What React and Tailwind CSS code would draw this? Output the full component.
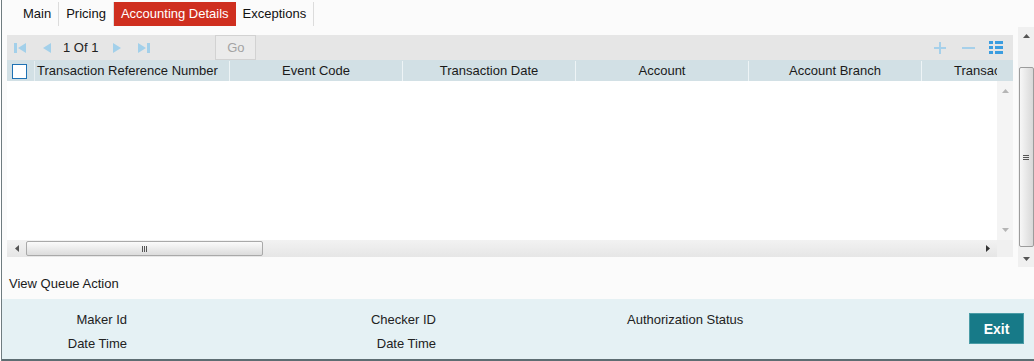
import React from 'react'

const TABS = ['Main', 'Pricing', 'Accounting Details', 'Exceptions']
const ACTIVE_TAB = 'Accounting Details'

const COLUMNS = ['Event Code', 'Transaction Date', 'Account', 'Account Branch', 'Transaction Status']

function NavIcon({ dir, edge }) {
  // pager arrows, light blue
  const flip = dir === 'right'
  return (
    <svg width={edge ? 12 : 10} height="12" viewBox={edge ? '0 0 12 12' : '0 0 10 12'} className="shrink-0" style={flip ? { transform: 'scaleX(-1)' } : undefined}>
      {edge && <rect x="0" y="1" width="3" height="10" fill="#a3d0ea" />}
      <polygon points={edge ? '12,1 4,6 12,11' : '10,1 2,6 10,11'} fill="#a3d0ea" />
    </svg>
  )
}

function Arrow({ dir, color = '#555' }) {
  const pts = {
    up: '0,4 3.5,0 7,4',
    down: '0,0 3.5,4 7,0',
    left: '4,0 0,3.5 4,7',
    right: '0,0 4,3.5 0,7',
  }[dir]
  const v = dir === 'up' || dir === 'down'
  return (
    <svg width={v ? 7 : 4} height={v ? 4 : 7} viewBox={v ? '0 0 7 4' : '0 0 4 7'}>
      <polygon points={pts} fill={color} />
    </svg>
  )
}

function Toolbar() {
  return (
    <div className="flex items-center h-[25px] bg-[#e6e6e6] pl-[7px]">
      <NavIcon dir="left" edge />
      <span className="ml-[15px] flex"><NavIcon dir="left" /></span>
      <span className="ml-[12px] text-[#222]">1 Of 1</span>
      <span className="ml-[15px] flex"><NavIcon dir="right" /></span>
      <span className="ml-[15px] flex"><NavIcon dir="right" edge /></span>
      <button className="ml-[65px] w-[41px] h-[25px] bg-[#ebebeb] border border-[#d2d2d2] text-[#a3a3a3] text-[13px]">Go</button>
      <div className="ml-auto mr-[10px] flex items-center">
        <svg width="12" height="12" viewBox="0 0 12 12">
          <rect x="5" y="0" width="2" height="12" fill="#a6d0ea" />
          <rect x="0" y="5" width="12" height="2" fill="#a6d0ea" />
        </svg>
        <svg width="13" height="12" viewBox="0 0 13 12" className="ml-[16px]">
          <rect x="0" y="5" width="13" height="2" fill="#a6d0ea" />
        </svg>
        <svg width="14" height="13" viewBox="0 0 14 13" className="ml-[14px]">
          {[0, 5, 10].map(y => (
            <g key={y}>
              <rect x="0" y={y} width="4" height="3" fill="#3b9de0" />
              <rect x="6" y={y} width="8" height="3" fill="#3b9de0" />
            </g>
          ))}
        </svg>
      </div>
    </div>
  )
}

function HeaderRow() {
  return (
    <div className="flex h-[21px] pt-px bg-[#d2e0e5] text-[#1a1a1a]">
      <div className="flex w-[990px] overflow-hidden">
        <div className="w-[28px] shrink-0 flex items-center pl-[5px] border-r border-[#e6eef1]">
          <div className="w-[15px] h-[15px] bg-white border border-[#1f72b4]" />
        </div>
        <div className="w-[195px] shrink-0 flex items-center pl-[2px] border-r border-[#eef4f6] whitespace-nowrap">
          Transaction Reference Number
        </div>
        {COLUMNS.map(c => (
          <div key={c} className="w-[173px] shrink-0 flex items-center justify-center border-r border-[#eef4f6] whitespace-nowrap">
            {c}
          </div>
        ))}
      </div>
      <div className="flex-1" />
    </div>
  )
}

function VScrollInner() {
  return (
    <div className="w-[16px] bg-[#f4f4f4] flex flex-col items-center justify-between py-[8px]">
      <Arrow dir="up" color="#b5b5b5" />
      <Arrow dir="down" color="#b5b5b5" />
    </div>
  )
}

function HScroll() {
  return (
    <div className="flex h-[17px]">
      <div className="w-[990px] flex items-center bg-gradient-to-b from-[#f2f2f2] to-[#e6e6e6]">
        <div className="w-[19px] flex justify-center"><Arrow dir="left" /></div>
        <div className="w-[237px] h-[15px] rounded-[2px] border border-[#a9a9a9] bg-gradient-to-b from-[#fbfbfb] to-[#dcdcdc] flex items-center justify-center gap-[1px]">
          <span className="w-px h-[6px] bg-[#555]" />
          <span className="w-px h-[6px] bg-[#555]" />
          <span className="w-px h-[6px] bg-[#555]" />
        </div>
        <div className="flex-1" />
        <div className="w-[19px] flex justify-center"><Arrow dir="right" color="#333" /></div>
      </div>
      <div className="flex-1 bg-[#f0f0f0]" />
    </div>
  )
}

function OuterScroll() {
  return (
    <div className="w-[16px] mt-[27px] h-[240px] bg-[#f0f0f0] flex flex-col items-center">
      <div className="h-[17px] flex items-center"><Arrow dir="up" /></div>
      <div className="h-[23px]" />
      <div className="w-[15px] h-[180px] rounded-[2px] border border-[#9c9c9c] bg-gradient-to-r from-[#f7f7f7] to-[#d8d8d8] flex flex-col items-center justify-center gap-[1px]">
        <span className="w-[6px] h-px bg-[#555]" />
        <span className="w-[6px] h-px bg-[#555]" />
        <span className="w-[6px] h-px bg-[#555]" />
      </div>
      <div className="flex-1" />
      <div className="h-[17px] flex items-center"><Arrow dir="down" /></div>
    </div>
  )
}

export default function App() {
  return (
    <div className="w-[1033px] h-[361px] ml-[1px] border-l border-[#6f7c80] bg-[#fbfbfb] overflow-hidden flex flex-col font-['Liberation_Sans',Arial,sans-serif] text-[13px] text-[#222] leading-[16px]">
      {/* Upper */}
      <div className="flex h-[299px]">
        <div className="flex-1 flex flex-col">
          {/* Tabs */}
          <div className="flex pt-[2px] pl-[14px] h-[26px]">
            {TABS.map(t => (
              <div
                key={t}
                className={
                  t === ACTIVE_TAB
                    ? 'h-[24px] px-[7px] flex items-center bg-[#cf2f1f] text-white'
                    : 'h-[24px] px-[7px] flex items-center text-[#111] border-r border-[#dcdcdc]'
                }
              >
                {t}
              </div>
            ))}
          </div>

          {/* Grid */}
          <div className="mt-[9px] ml-[5px] w-[1006px] flex flex-col">
            <Toolbar />
            <HeaderRow />
            <div className="flex h-[159px]">
              <div className="w-[990px] bg-white" />
              <VScrollInner />
            </div>
            <HScroll />
          </div>

          <div className="pl-[7px] mt-[19px] text-[#1a1a1a]">View Queue Action</div>
        </div>
        <OuterScroll />
      </div>

      {/* Footer */}
      <div className="flex-1 bg-[#e5f1f4] border-b-2 border-[#5d6d72] flex items-start">
        <div className="flex pt-[13px]">
          <div className="w-[125px] flex flex-col items-end gap-[8px]">
            <span>Maker Id</span>
            <span>Date Time</span>
          </div>
          <div className="w-[309px] flex flex-col items-end gap-[8px]">
            <span>Checker ID</span>
            <span>Date Time</span>
          </div>
          <div className="ml-[191px]">Authorization Status</div>
        </div>
        <button className="ml-auto mr-[10px] mt-[14px] w-[55px] h-[31px] bg-[#177a88] border border-[#4a9ca6] text-white font-bold text-[14px]">
          Exit
        </button>
      </div>
    </div>
  )
}
